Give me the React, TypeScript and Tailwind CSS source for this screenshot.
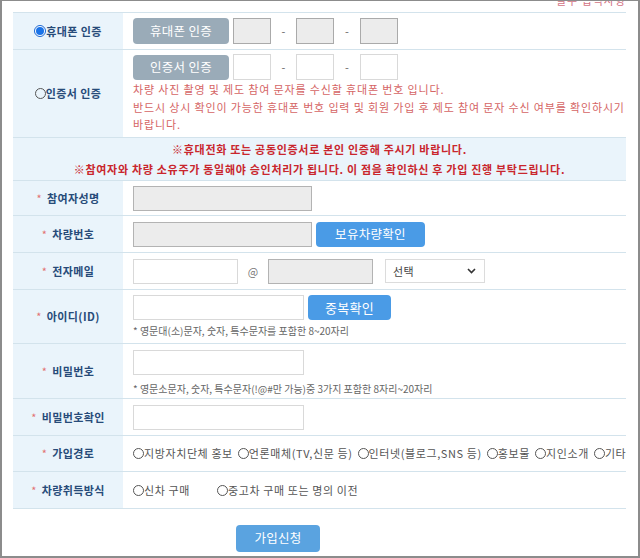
import type { ReactNode } from "react";

const FONT = "font-['Noto_Sans_CJK_KR','Malgun_Gothic',sans-serif]";

function Radio({ checked = false }: { checked?: boolean }) {
  if (checked) {
    return (
      <span className="inline-flex h-[12px] w-[12px] shrink-0 items-center justify-center rounded-full border border-[#1a66d2] bg-white">
        <span className="h-[8px] w-[8px] rounded-full bg-[#1a73e8]" />
      </span>
    );
  }
  return <span className="inline-block h-[11px] w-[11px] shrink-0 rounded-full border border-[#555]" />;
}

type RowProps = {
  label: ReactNode;
  height: string;
  required?: boolean;
  children: ReactNode;
  content?: string;
};

function Row({ label, height, required = true, children, content }: RowProps) {
  return (
    <div className={`flex border-b border-[#d3e3ec] ${height}`}>
      <div className="flex w-[110px] shrink-0 items-center justify-center bg-[#eaf4fb] text-[11px] font-bold tracking-[0.4px] text-[#274b79]">
        {required && <span className="mr-[5px] font-normal text-[#e27272]">*</span>}
        {label}
      </div>
      <div className={content ?? "flex flex-1 items-center gap-[4px] pl-[10px]"}>{children}</div>
    </div>
  );
}

function Box({ gray = false, w }: { gray?: boolean; w: string }) {
  return (
    <div
      className={`h-[25px] ${w} border ${
        gray ? "border-[#b3b3b3] bg-[#ececec]" : "border-[#d9d9d9] bg-white"
      }`}
    />
  );
}

function PhoneBoxes({ gray }: { gray?: boolean }) {
  const box = gray ? "border-[#aaa] bg-[#ececec]" : "border-[#d9d9d9] bg-white";
  return (
    <div className="flex items-center">
      <div className={`h-[26px] w-[38px] border ${box}`} />
      <span className="w-[25px] text-center text-[11px] text-[#666]">-</span>
      <div className={`h-[26px] w-[38px] border ${box}`} />
      <span className="w-[26px] text-center text-[11px] text-[#666]">-</span>
      <div className={`h-[26px] w-[38px] border ${box}`} />
    </div>
  );
}

const routes = ["지방자치단체 홍보", "언론매체(TV,신문 등)", "인터넷(블로그,SNS 등)", "홍보물", "지인소개", "기타"];

export default function App() {
  return (
    <div className={`h-[558px] w-[640px] overflow-hidden border-x-2 border-t border-b-2 border-[#8c8c8c] bg-white ${FONT}`}>
      <div className="flex h-[11px] justify-end overflow-hidden pr-[12px]">
        <span className="mt-[-6px] text-[11px] leading-[11px] tracking-[1px] text-[#d37384]">필수 입력사항</span>
      </div>

      <div className="ml-[11px] mr-[12px] border-t border-[#d3e3ec]">
        <Row
          required={false}
          height="h-[37px]"
          label={
            <span className="flex items-center">
              <Radio checked />
              휴대폰 인증
            </span>
          }
        >
          <button className="h-[26px] w-[96px] rounded-[4px] bg-[#9aabb8] text-[12.5px] tracking-[0.3px] text-white">휴대폰 인증</button>
          <PhoneBoxes gray />
        </Row>

        <Row
          required={false}
          height="h-[88px]"
          content="flex flex-1 flex-col pl-[10px] pt-[4px]"
          label={
            <span className="flex items-center">
              <Radio />
              인증서 인증
            </span>
          }
        >
          <div className="flex items-center gap-[4px]">
            <button className="h-[25px] w-[96px] rounded-[4px] bg-[#9aabb8] text-[12.5px] tracking-[0.3px] text-white">인증서 인증</button>
            <PhoneBoxes />
          </div>
          <div className="mt-[1px] whitespace-nowrap text-[11px] leading-[17.5px] tracking-[0.85px] text-[#d56565]">
            <div>차량 사진 촬영 및 제도 참여 문자를 수신할 휴대폰 번호 입니다.</div>
            <div>반드시 상시 확인이 가능한 휴대폰 번호 입력 및 회원 가입 후 제도 참여 문자 수신 여부를 확인하시기</div>
            <div>바랍니다.</div>
          </div>
        </Row>

        <div className="flex h-[43px] flex-col items-center justify-center border-b border-[#d3e3ec] bg-[#eaf4fb] text-[11px] font-bold leading-[20px] tracking-[0.7px] text-[#c9262d]">
          <div>※휴대전화 또는 공동인증서로 본인 인증해 주시기 바랍니다.</div>
          <div>※참여자와 차량 소유주가 동일해야 승인처리가 됩니다. 이 점을 확인하신 후 가입 진행 부탁드립니다.</div>
        </div>

        <Row height="h-[35px]" label="참여자성명">
          <Box gray w="w-[179px]" />
        </Row>

        <Row height="h-[37px]" label="차량번호">
          <Box gray w="w-[179px]" />
          <button className="h-[25px] w-[109px] rounded-[4px] bg-[#4a9be6] text-[12.5px] tracking-[0.3px] text-white">보유차량확인</button>
        </Row>

        <Row height="h-[37px]" label="전자메일" content="flex flex-1 items-center pl-[10px]">
          <Box w="w-[105px]" />
          <span className="w-[30px] text-center text-[11px] text-[#777]">@</span>
          <Box gray w="w-[105px]" />
          <div className="ml-[12px] flex h-[24px] w-[100px] items-center justify-between border border-[#dcdcdc] bg-white pl-[7px] pr-[8px] text-[11px] tracking-[0.5px] text-[#444]">
            <span>선택</span>
            <svg width="9" height="6" viewBox="0 0 9 6" fill="none">
              <path d="M1 1l3.5 3.5L8 1" stroke="#333" strokeWidth="1.6" />
            </svg>
          </div>
        </Row>

        <Row height="h-[54px]" label="아이디(ID)" content="flex flex-1 flex-col pl-[10px] pt-[5px]">
          <div className="flex gap-[4px]">
            <Box w="w-[171px]" />
            <button className="h-[25px] w-[83px] rounded-[4px] bg-[#4a9be6] text-[13px] tracking-[0.3px] text-white">중복확인</button>
          </div>
          <div className="mt-[5px] text-[10px] leading-[12px] text-[#666]">* 영문대(소)문자, 숫자, 특수문자를 포함한 8~20자리</div>
        </Row>

        <Row height="h-[55px]" label="비밀번호" content="flex flex-1 flex-col pl-[10px] pt-[6px]">
          <Box w="w-[171px]" />
          <div className="mt-[8px] text-[10px] leading-[12px] text-[#666]">
            * 영문소문자, 숫자, 특수문자(!@#만 가능)중 3가지 포함한 8자리~20자리
          </div>
        </Row>

        <Row height="h-[37px]" label="비밀번호확인">
          <Box w="w-[171px]" />
        </Row>

        <Row
          height="h-[36px]"
          label="가입경로"
          content="flex flex-1 items-center gap-[5px] whitespace-nowrap pl-[10px] text-[11px] tracking-[0.6px] text-[#555]"
        >
          {routes.map((r) => (
            <span key={r} className="flex items-center">
              <Radio />
              {r}
            </span>
          ))}
        </Row>

        <Row
          height="h-[37px]"
          label="차량취득방식"
          content="flex flex-1 items-center whitespace-nowrap pl-[10px] text-[11px] tracking-[0.6px] text-[#555]"
        >
          <span className="flex w-[84px] items-center">
            <Radio />
            신차 구매
          </span>
          <span className="flex items-center">
            <Radio />
            중고차 구매 또는 명의 이전
          </span>
        </Row>
      </div>

      <div className="pl-[234px] pt-[15px]">
        <button className="h-[27px] w-[84px] rounded-[4px] bg-[#5aa3e0] text-[12.5px] tracking-[0.3px] text-white">가입신청</button>
      </div>
    </div>
  );
}
